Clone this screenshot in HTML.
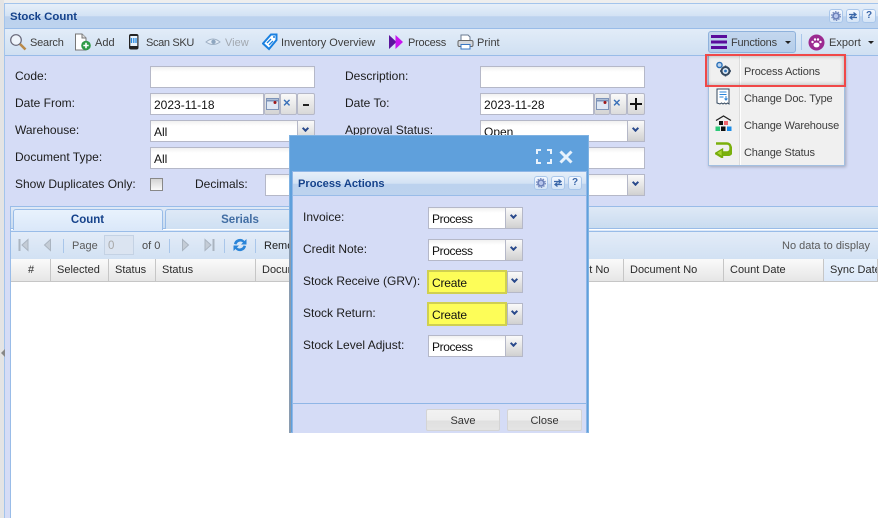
<!DOCTYPE html>
<html><head><meta charset="utf-8">
<style>
html,body{margin:0;padding:0;background:#fff}
#p{position:relative;width:878px;height:518px;overflow:hidden;background:#fff;font:12px/14px "Liberation Sans",Arial,sans-serif;color:#222}
#p div,#p span.a,#p svg{position:absolute}
.t{white-space:nowrap}
.l{font-size:12px;color:#1c1c1c;white-space:nowrap}
.tb{font-size:11px;color:#3c3c3c;white-space:nowrap}
.in{background:linear-gradient(#f1f1f1 0,#fff 5px);border:1px solid #b5b8c8;box-sizing:border-box;height:22px;font-size:12px;line-height:22px;padding-left:3px;color:#111;overflow:hidden;white-space:nowrap}
.tr{background:linear-gradient(#fafafa,#e8e8e8 45%,#d0d0d0);border:1px solid #b5b8c8;box-sizing:border-box;height:22px;width:18px}
.tr:after{content:"";position:absolute;left:50%;margin-left:-3.5px;top:5px;width:3px;height:3px;border-right:2px solid #2a4a8c;border-bottom:2px solid #2a4a8c;transform:rotate(45deg)}
.btn{background:linear-gradient(#f2f2f2,#eee 50%,#e0e0e0 55%,#e4e4e4);border:1px solid #d4d4d4;box-sizing:border-box;height:22px;border-radius:2px}
.ic{background:linear-gradient(#f4f8ff,#d4e4f6);border:1px solid #a9c6ea;box-sizing:border-box;width:14px;height:14px;border-radius:3px;font:bold 10px/12px "Liberation Sans",sans-serif;text-align:center;color:#3a66a8}
.ic svg{left:1px;top:1px}
.hd{background:linear-gradient(#fafafa,#e6e6e6);border-right:1px solid #c6c6c6;border-bottom:1px solid #c6c6c6;box-sizing:border-box;height:23px;top:259px;font-size:11px;line-height:23px;padding-left:6px;color:#2a2a2a;white-space:nowrap;overflow:hidden}
.mi{font-size:11px;color:#3c3c3c;left:744px;white-space:nowrap;letter-spacing:-.15px}
.sep{width:1px;height:14px;background:#a9c6ea;top:239px}
.pv{letter-spacing:-.4px}
.cr{letter-spacing:-.2px}
</style></head><body>
<div id="p">
<!-- left strip -->
<div style="left:0;top:0;width:878px;height:3px;background:#eee"></div>
<div style="left:0;top:0;width:4px;height:518px;background:#e4e4e4"></div>
<div style="left:4px;top:3px;width:874px;height:515px;background:#d5dcf6;border-left:1px solid #a3c4ec;box-sizing:border-box"></div>
<div style="left:1px;top:349px;width:0;height:0;border-right:4px solid #888;border-top:4px solid transparent;border-bottom:4px solid transparent"></div>
<!-- title -->
<div style="left:4px;top:3px;width:874px;height:26px;background:linear-gradient(#e6eff9 0,#d3e2f4 50%,#bcd2ee 52%,#bdd3ee 100%);border-top:1px solid #a3c4ec;border-left:1px solid #a3c4ec;border-bottom:1px solid #99bce8;box-sizing:border-box"></div>
<div class="t" style="left:10px;top:10px;font-weight:bold;font-size:11.4px;color:#15428b">Stock Count</div>
<div class="ic" style="left:829px;top:9px"><svg width="10" height="10" viewBox="0 0 10 10"><circle cx="5" cy="5" r="3" fill="#b8c6ec" stroke="#6a7fb8" stroke-width="1.600"/><circle cx="5" cy="5" r="4.400" fill="none" stroke="#6a7fb8" stroke-width="1" stroke-dasharray="1.500 1.300"/></svg></div>
<div class="ic" style="left:846px;top:9px"><svg width="10" height="10" viewBox="0 0 10 10"><path d="M1 3.500h6M5.500 1.500L8 3.500 5.500 5.500M9 6.500H3M4.500 4.500L2 6.500 4.500 8.500" fill="none" stroke="#3a66a8" stroke-width="1.300"/></svg></div>
<div class="ic" style="left:862px;top:9px">?</div>
<!-- toolbar -->
<div style="left:5px;top:29px;width:873px;height:27px;background:linear-gradient(#e2ecf8,#d0e0f2);border-bottom:1px solid #99bce8;box-sizing:border-box"></div>
<svg style="left:9px;top:33px" width="18" height="18" viewBox="0 0 18 18"><circle cx="7" cy="7" r="5.300" fill="#eef4fb" stroke="#667" stroke-width="1.200"/><path d="M11 11L16.500 16.500" stroke="#b98a4a" stroke-width="2.600"/></svg>
<div class="tb" style="left:30px;top:36px;letter-spacing:-.2px">Search</div>
<svg style="left:74px;top:33px" width="20" height="18" viewBox="0 0 20 18"><path d="M1.500 1H8l4 4v12H1.500z" fill="#fff" stroke="#777"/><path d="M8 1v4h4" fill="#ddd" stroke="#777"/><circle cx="12" cy="12.500" r="4.800" fill="#2f9a46"/><path d="M12 9.800v5.400M9.300 12.500h5.400" stroke="#fff" stroke-width="1.600"/></svg>
<div class="tb" style="left:95px;top:36px">Add</div>
<svg style="left:128px;top:33px" width="12" height="18" viewBox="0 0 12 18"><rect x="1" y="1" width="9.500" height="15.500" rx="2" fill="#222"/><rect x="2.300" y="3" width="7" height="10" fill="#e8f2fb"/><path d="M3.500 5v5M5.800 5v5M8 5v5" stroke="#2a8be0" stroke-width="1.300"/></svg>
<div class="tb" style="left:146px;top:36px;letter-spacing:-.35px">Scan SKU</div>
<svg style="left:205px;top:37px" width="16" height="10" viewBox="0 0 16 10"><path d="M1 5Q8-1 15 5Q8 10 1 5z" fill="#e4edf8" stroke="#9fb0c4"/><circle cx="8.500" cy="4.800" r="2.200" fill="#8ea6c0"/></svg>
<div class="tb" style="left:225px;top:36px;color:#a2a8b0">View</div>
<svg style="left:262px;top:33px" width="16" height="18" viewBox="0 0 16 18"><path d="M9 1.500h5.500V7L7 16 1 10.500z" fill="#fff" stroke="#1a80e0" stroke-width="2"/><path d="M5 10l4-4M7 12l4-4" stroke="#1a80e0" stroke-width="1.300"/><circle cx="12" cy="4" r="1" fill="#1a80e0"/></svg>
<div class="tb" style="left:281px;top:36px">Inventory Overview</div>
<svg style="left:388px;top:34px" width="16" height="16" viewBox="0 0 16 16"><path d="M1 1L8.500 8 1 15z" fill="#5a149c"/><path d="M7.500 1L15 8 7.500 15z" fill="#c814f0"/></svg>
<div class="tb" style="left:408px;top:36px;letter-spacing:-.25px">Process</div>
<svg style="left:457px;top:34px" width="17" height="16" viewBox="0 0 17 16"><path d="M4 7V1h7l2 2v4" fill="#fff" stroke="#6a7a90"/><rect x="1" y="6.500" width="15" height="6" rx="1.500" fill="#d4d8de" stroke="#666"/><rect x="4" y="10.500" width="9" height="4.500" fill="#fff" stroke="#3a78c4"/></svg>
<div class="tb" style="left:477px;top:36px">Print</div>
<!-- functions -->
<div style="left:708px;top:31px;width:88px;height:22px;background:linear-gradient(#c4d7ee,#b4cdea);border:1px solid #8fb2dc;border-radius:3px;box-sizing:border-box"></div>
<svg style="left:710px;top:35px" width="18" height="14" viewBox="0 0 18 14"><path d="M1 1.500h16M1 7h16M1 12.500h16" stroke="#5a0c9c" stroke-width="3"/></svg>
<div class="tb" style="left:731px;top:36px;letter-spacing:-.2px">Functions</div>
<div style="left:785px;top:41px;border-left:3px solid transparent;border-right:3px solid transparent;border-top:3px solid #222"></div>
<div style="left:801px;top:34px;width:1px;height:16px;background:#a9c6ea"></div>
<svg style="left:808px;top:34px" width="17" height="17" viewBox="0 0 17 17"><circle cx="8.500" cy="8.500" r="8" fill="#9c2a90"/><ellipse cx="8.500" cy="11" rx="3" ry="2.400" fill="#fff"/><circle cx="4.500" cy="8" r="1.200" fill="#fff"/><circle cx="7" cy="5.500" r="1.200" fill="#fff"/><circle cx="10" cy="5.500" r="1.200" fill="#fff"/><circle cx="12.500" cy="8" r="1.200" fill="#fff"/></svg>
<div class="tb" style="left:829px;top:36px">Export</div>
<div style="left:868px;top:41px;border-left:3px solid transparent;border-right:3px solid transparent;border-top:3px solid #222"></div>

<!-- form left -->
<div class="l" style="left:15px;top:69px">Code:</div>
<div class="in" style="left:150px;top:66px;width:165px"></div>
<div class="l" style="left:15px;top:96px">Date From:</div>
<div class="in" style="left:150px;top:93px;width:114px;line-height:23px">2023-11-18</div>
<div class="btn" style="left:264px;top:93px;width:16px;background:linear-gradient(#eee,#d4d4d4);border-color:#b5b8c8"></div>
<svg style="left:266px;top:98px" width="13" height="12" viewBox="0 0 13 12"><rect x=".5" y=".5" width="12" height="11" fill="#dfe8f4" stroke="#7d93b8"/><path d="M.5 2.500h12" stroke="#7d93b8" stroke-width="2"/><circle cx="9" cy="4.500" r="1.500" fill="#a01818"/></svg>
<div class="btn" style="left:280px;top:93px;width:17px;background:linear-gradient(#fafafa,#dcdcdc);border-color:#b5b8c8"></div>
<div class="t" style="left:283px;top:96px;font-weight:bold;color:#3a70b8;font-size:13px">×</div>
<div class="btn" style="left:297px;top:93px;width:18px;background:linear-gradient(#f6f6f6,#d8d8d8);border-color:#b5b8c8"></div>
<div style="left:303px;top:104px;width:6px;height:2px;background:#222"></div>
<div class="l" style="left:15px;top:123px">Warehouse:</div>
<div class="in" style="left:150px;top:120px;width:148px">All</div>
<div class="tr" style="left:297px;top:120px"></div>
<div class="l" style="left:15px;top:150px">Document Type:</div>
<div class="in" style="left:150px;top:147px;width:148px">All</div>
<div class="l" style="left:15px;top:177px">Show Duplicates Only:</div>
<div style="left:150px;top:178px;width:13px;height:13px;border:1px solid #888;background:linear-gradient(#d4d4d4,#fafafa);box-sizing:border-box"></div>
<div class="l" style="left:195px;top:177px">Decimals:</div>
<div class="in" style="left:265px;top:174px;width:40px"></div>
<!-- form right -->
<div class="l" style="left:345px;top:69px">Description:</div>
<div class="in" style="left:480px;top:66px;width:165px"></div>
<div class="l" style="left:345px;top:96px">Date To:</div>
<div class="in" style="left:480px;top:93px;width:114px;line-height:23px">2023-11-28</div>
<div class="btn" style="left:594px;top:93px;width:16px;background:linear-gradient(#eee,#d4d4d4);border-color:#b5b8c8"></div>
<svg style="left:596px;top:98px" width="13" height="12" viewBox="0 0 13 12"><rect x=".5" y=".5" width="12" height="11" fill="#dfe8f4" stroke="#7d93b8"/><path d="M.5 2.500h12" stroke="#7d93b8" stroke-width="2"/><circle cx="9" cy="4.500" r="1.500" fill="#a01818"/></svg>
<div class="btn" style="left:610px;top:93px;width:17px;background:linear-gradient(#fafafa,#dcdcdc);border-color:#b5b8c8"></div>
<div class="t" style="left:613px;top:96px;font-weight:bold;color:#3a70b8;font-size:13px">×</div>
<div class="btn" style="left:627px;top:93px;width:18px;background:linear-gradient(#f6f6f6,#d8d8d8);border-color:#b5b8c8"></div>
<svg style="left:630px;top:98px" width="12" height="12" viewBox="0 0 12 12"><path d="M6 0v12M0 6h12" stroke="#111" stroke-width="2"/></svg>
<div class="l" style="left:345px;top:123px">Approval Status:</div>
<div class="in" style="left:480px;top:120px;width:148px">Open</div>
<div class="tr" style="left:627px;top:120px"></div>
<div class="in" style="left:480px;top:147px;width:165px"></div>
<div class="in" style="left:480px;top:174px;width:148px"></div>
<div class="tr" style="left:627px;top:174px"></div>

<!-- tab panel -->
<div style="left:10px;top:206px;width:868px;height:312px;background:#fff;border-left:1px solid #99bce8;border-top:1px solid #99bce8;box-sizing:border-box"></div>
<div style="left:11px;top:207px;width:867px;height:22px;background:linear-gradient(#dfe9f6,#c9dcf0);border-bottom:1px solid #99bce8;box-sizing:border-box"></div>
<div style="left:13px;top:209px;width:150px;height:21px;background:linear-gradient(#e8f2fd,#dbe8f9);border:1px solid #99bce8;border-bottom:0;border-radius:3px 3px 0 0;box-sizing:border-box"></div>
<div class="t" style="left:13px;top:213px;width:149px;text-align:center;font-weight:bold;font-size:11.5px;color:#15428b">Count</div>
<div style="left:165px;top:209px;width:150px;height:20px;background:linear-gradient(#dee9f6,#cfe0f3);border:1px solid #99bce8;border-bottom:0;border-radius:3px 3px 0 0;box-sizing:border-box"></div>
<div class="t" style="left:165px;top:213px;width:150px;text-align:center;font-weight:bold;font-size:11.5px;color:#416da3">Serials</div>
<div style="left:11px;top:230px;width:867px;height:2px;background:#dbe8f9;border-bottom:1px solid #99bce8;box-sizing:border-box"></div>
<div style="left:11px;top:232px;width:867px;height:27px;background:linear-gradient(#e3ecf8,#d2e1f3);box-sizing:border-box"></div>
<svg style="left:18px;top:238px" width="12" height="14" viewBox="0 0 12 14"><path d="M1.500 1v12" stroke="#aab4c0" stroke-width="2"/><path d="M10 1.500v11L4 7z" fill="#c4ccd6" stroke="#aab4c0"/></svg>
<svg style="left:43px;top:238px" width="9" height="14" viewBox="0 0 9 14"><path d="M7.500 1.500v11L1.500 7z" fill="#c4ccd6" stroke="#aab4c0"/></svg>
<div class="sep" style="left:63px"></div>
<div class="tb" style="left:72px;top:239px;color:#5a5a5a">Page</div>
<div style="left:104px;top:235px;width:30px;height:20px;border:1px solid #c4d2e4;background:#dbe4f1;box-sizing:border-box;font-size:11.5px;line-height:20px;padding-left:3px;color:#a8a8a8">0</div>
<div class="tb" style="left:142px;top:239px;color:#4a4a4a">of 0</div>
<div class="sep" style="left:169px"></div>
<svg style="left:181px;top:238px" width="9" height="14" viewBox="0 0 9 14"><path d="M1.500 1.500v11L7.500 7z" fill="#c4ccd6" stroke="#aab4c0"/></svg>
<svg style="left:203px;top:238px" width="12" height="14" viewBox="0 0 12 14"><path d="M10.500 1v12" stroke="#aab4c0" stroke-width="2"/><path d="M2 1.500v11L8 7z" fill="#c4ccd6" stroke="#aab4c0"/></svg>
<div class="sep" style="left:224px"></div>
<svg style="left:232px;top:237px" width="16" height="16" viewBox="0 0 16 16"><path d="M2 7A6 6 0 0 1 12.500 4L14.500 2V7.500H9L11 5.500A4 4 0 0 0 4.500 7.500z" fill="#2a84d8"/><path d="M14 9A6 6 0 0 1 3.500 12L1.500 14V8.500H7L5 10.500A4 4 0 0 0 11.500 8.500z" fill="#2a84d8"/></svg>
<div class="sep" style="left:255px"></div>
<div class="tb" style="left:264px;top:239px;color:#222">Remove</div>
<div class="tb" style="left:782px;top:239px;color:#5a5a5a">No data to display</div>
<!-- headers -->
<div class="hd" style="left:11px;width:40px;padding-left:17px">#</div>
<div class="hd" style="left:51px;width:58px">Selected</div>
<div class="hd" style="left:109px;width:47px">Status</div>
<div class="hd" style="left:156px;width:100px">Status</div>
<div class="hd" style="left:256px;width:368px">Document No</div>
<div class="hd" style="left:520px;width:104px;padding-left:57px">Lot No</div>
<div class="hd" style="left:624px;width:100px">Document No</div>
<div class="hd" style="left:724px;width:100px">Count Date</div>
<div class="hd" style="left:824px;width:54px;background:linear-gradient(#e8f2fd,#dbe8f9)">Sync Date</div>

<!-- menu -->
<div style="left:708px;top:55px;width:137px;height:111px;background:#f0f0f0;border:1px solid #a3bfe0;box-shadow:1px 1px 3px rgba(0,0,0,.25);box-sizing:border-box"></div>
<div style="left:739px;top:56px;width:1px;height:109px;background:#dcdcdc;border-right:1px solid #fff"></div>
<svg style="left:715px;top:61px" width="17" height="17" viewBox="0 0 17 17"><circle cx="4.500" cy="4" r="2.600" fill="#bcd4ee" stroke="#2a70b8" stroke-width="1.400"/><circle cx="10.500" cy="10" r="4" fill="#dce8f4" stroke="#33475e" stroke-width="2"/><circle cx="10.500" cy="10" r="1.400" fill="#2a70b8"/><path d="M10.500 4.500v1.500M10.500 14v1.500M5 10h1.500M14.500 10H16" stroke="#33475e" stroke-width="1.500"/></svg>
<div class="mi" style="top:65px">Process Actions</div>
<svg style="left:716px;top:88px" width="15" height="18" viewBox="0 0 15 18"><path d="M1 1h12v15l-1.500-1-1.500 1-1.500-1-1.500 1-1.500-1-1.500 1L1 15z" fill="#fff" stroke="#33475e"/><path d="M3.500 4h7M3.500 6.500h7M3.500 9h4" stroke="#2a84d8"/><path d="M10 8v4m-1.500-1.500L10 12l1.500-1.500" stroke="#2a84d8"/></svg>
<div class="mi" style="top:92px">Change Doc. Type</div>
<svg style="left:715px;top:115px" width="17" height="17" viewBox="0 0 17 17"><path d="M1 5.500L8.500 1 16 5.500" fill="none" stroke="#222" stroke-width="1.300"/><rect x="4" y="6" width="4" height="4" fill="#111"/><rect x="9" y="6" width="4" height="4" fill="#f0646c"/><rect x="0.500" y="11.500" width="4.500" height="4.500" fill="#2cc878"/><rect x="6" y="11.500" width="4.500" height="4.500" fill="#111"/><rect x="12" y="11.500" width="4.500" height="4.500" fill="#1a8ce8"/></svg>
<div class="mi" style="top:119px">Change Warehouse</div>
<svg style="left:715px;top:142px" width="17" height="16" viewBox="0 0 17 16"><path d="M1 1.500h11a3.500 3.500 0 0 1 3.500 3.500v2a3.500 3.500 0 0 1-3.500 3.500H7V8L1 11.500 7 15v-2.200h5.500A4 4 0 0 0 16.500 7V4.500" fill="none" stroke="#7ab00c" stroke-width="2.400"/><path d="M7 7.500L1.500 11 7 14.500z" fill="#a8d630" stroke="#6a9c08" stroke-width=".6"/></svg>
<div class="mi" style="top:146px">Change Status</div>
<!-- red box -->
<div style="left:705px;top:54px;width:141px;height:33px;border:2px solid #f04848;box-shadow:inset 0 0 4px rgba(0,0,0,.3);box-sizing:border-box"></div>

<!-- dialog -->
<div style="left:289px;top:135px;width:300px;height:298px;background:#5fa0dc;border:1px solid #7fb2e2;box-sizing:border-box"></div>
<svg style="left:536px;top:149px" width="16" height="15" viewBox="0 0 16 15"><path d="M1 5V1h4M11 1h4v4M15 10v4h-4M5 14H1v-4" fill="none" stroke="#e8f2fc" stroke-width="2"/></svg>
<svg style="left:559px;top:150px" width="14" height="14" viewBox="0 0 14 14"><path d="M1.500 1.500l11 11M12.500 1.500l-11 11" stroke="#e8f2fc" stroke-width="3"/></svg>
<div style="left:289px;top:230px;width:2px;height:203px;background:#8a9cb0"></div>
<div style="left:292px;top:171px;width:295px;height:262px;background:#d5dcf6;border:1px solid #8fb6e6;border-bottom:0;box-sizing:border-box"></div>
<div style="left:293px;top:172px;width:293px;height:24px;background:linear-gradient(#e6eff9,#d3e2f4 50%,#bcd2ee 52%,#bdd3ee);border-bottom:1px solid #99bce8;box-sizing:border-box"></div>
<div class="t" style="left:298px;top:177px;font-weight:bold;font-size:11.1px;color:#15428b">Process Actions</div>
<div class="ic" style="left:534px;top:176px"><svg width="10" height="10" viewBox="0 0 10 10"><circle cx="5" cy="5" r="3" fill="#b8c6ec" stroke="#6a7fb8" stroke-width="1.600"/><circle cx="5" cy="5" r="4.400" fill="none" stroke="#6a7fb8" stroke-width="1" stroke-dasharray="1.500 1.300"/></svg></div>
<div class="ic" style="left:551px;top:176px"><svg width="10" height="10" viewBox="0 0 10 10"><path d="M1 3.500h6M5.500 1.500L8 3.500 5.500 5.500M9 6.500H3M4.500 4.500L2 6.500 4.500 8.500" fill="none" stroke="#3a66a8" stroke-width="1.300"/></svg></div>
<div class="ic" style="left:568px;top:176px">?</div>
<div class="l" style="left:303px;top:210px">Invoice:</div>
<div class="in pv" style="left:428px;top:207px;width:78px">Process</div>
<div class="tr" style="left:505px;top:207px"></div>
<div class="l" style="left:303px;top:242px">Credit Note:</div>
<div class="in pv" style="left:428px;top:239px;width:78px">Process</div>
<div class="tr" style="left:505px;top:239px"></div>
<div class="l" style="left:303px;top:274px">Stock Receive (GRV):</div>
<div class="in cr" style="left:427px;top:270px;width:80px;height:24px;line-height:22px;background:#fdfd58;border:2px solid #d0d050;padding-left:3px">Create</div>
<div class="tr" style="left:507px;top:271px;width:16px"></div>
<div class="l" style="left:303px;top:306px">Stock Return:</div>
<div class="in cr" style="left:427px;top:302px;width:80px;height:24px;line-height:22px;background:#fdfd58;border:2px solid #d0d050;padding-left:3px">Create</div>
<div class="tr" style="left:507px;top:303px;width:16px"></div>
<div class="l" style="left:303px;top:338px">Stock Level Adjust:</div>
<div class="in pv" style="left:428px;top:335px;width:78px">Process</div>
<div class="tr" style="left:505px;top:335px"></div>
<div style="left:293px;top:403px;width:293px;height:1px;background:#8fb6e6"></div>
<div class="btn" style="left:426px;top:409px;width:74px"></div>
<div class="t" style="left:426px;top:414px;width:74px;text-align:center;font-size:11px;color:#333">Save</div>
<div class="btn" style="left:507px;top:409px;width:75px"></div>
<div class="t" style="left:507px;top:414px;width:75px;text-align:center;font-size:11px;color:#333">Close</div>
</div>
</body></html>
